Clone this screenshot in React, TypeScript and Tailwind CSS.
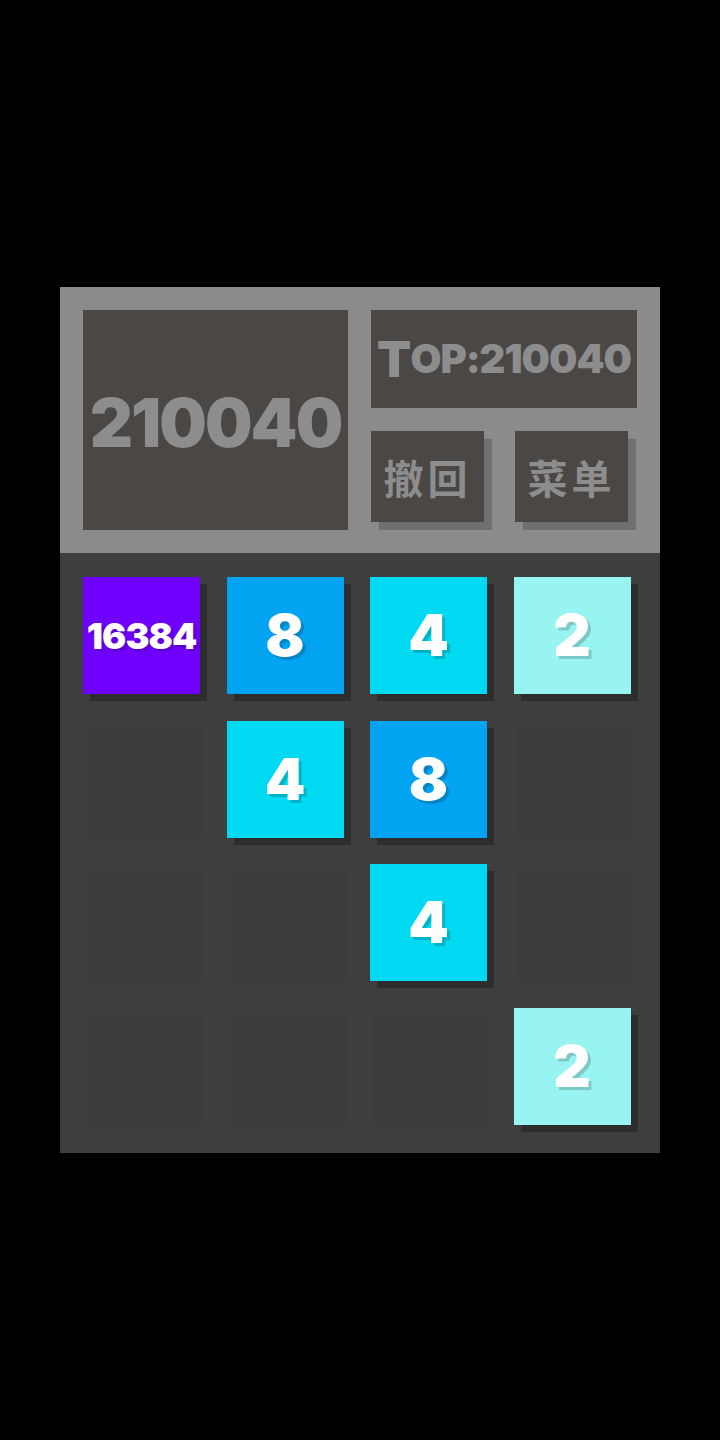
import React from 'react';

type Cell = number | null;

const board: Cell[] = [
  16384, 8, 4, 2,
  null, 4, 8, null,
  null, null, 4, null,
  null, null, null, 2,
];

const tileColors: Record<number, string> = {
  2: 'bg-[#98f4f1]',
  4: 'bg-[#00d9f2]',
  8: 'bg-[#02a3f0]',
  16384: 'bg-[#6f00ff]',
};

const numFont = { fontFamily: 'Inter, "Liberation Sans", sans-serif' };
const cjkFont = { fontFamily: '"Noto Sans CJK SC", "Noto Sans", sans-serif' };

function Tile({ value }: { value: Cell }) {
  if (value === null) {
    return <div className="ml-[5px] mt-[5px] h-[113px] w-[113px] bg-[#3c3c3c]" />;
  }
  const big = value >= 1000;
  return (
    <div
      className={`flex h-[117px] w-[117px] items-center justify-center font-black text-white shadow-[7px_7px_0_#2d2d2d] ${tileColors[value]} ${
        big ? 'text-[36px] tracking-[-1px]' : 'text-[58px]'
      } [text-shadow:3px_3px_0_rgba(0,0,0,0.18)]`}
      style={numFont}
    >
      {value}
    </div>
  );
}

export default function App() {
  return (
    <div className="flex min-h-screen items-center justify-center bg-black">
      <div className="flex w-[600px] flex-col">
        {/* Header */}
        <div className="flex h-[266px] gap-[23px] bg-[#8b8b89] p-[23px]">
          <div
            className="flex h-[220px] w-[265px] items-center justify-center bg-[#4b4745] pt-[6px] text-[67px] font-black tracking-[-2px] text-[#8d8d8d]"
            style={numFont}
          >
            210040
          </div>
          <div className="flex w-[266px] flex-col gap-[23px]">
            <div
              className="flex h-[98px] items-center justify-center bg-[#4b4745] font-black text-[#8d8d8d]"
              style={numFont}
            >
              <span className="text-[50px] tracking-[-1px]">T</span>
              <span className="text-[40px] tracking-[-1px]">OP:210040</span>
            </div>
            <div className="flex gap-[31px]">
              {['撤回', '菜单'].map((label) => (
                <div
                  key={label}
                  className="flex h-[91px] w-[113px] items-center justify-center bg-[#4b4745] text-[40px] font-bold tracking-[4px] text-[#8d8d8d] shadow-[8px_8px_0_#6f6f6d]"
                  style={cjkFont}
                >
                  {label}
                </div>
              ))}
            </div>
          </div>
        </div>

        {/* Board */}
        <div className="h-[600px] bg-[#3e3e3e] pl-[23px] pt-[24px]">
          <div className="grid grid-cols-[repeat(4,117px)] grid-rows-[repeat(4,117px)] gap-[26.5px]">
            {board.map((v, i) => (
              <Tile key={i} value={v} />
            ))}
          </div>
        </div>
      </div>
    </div>
  );
}
